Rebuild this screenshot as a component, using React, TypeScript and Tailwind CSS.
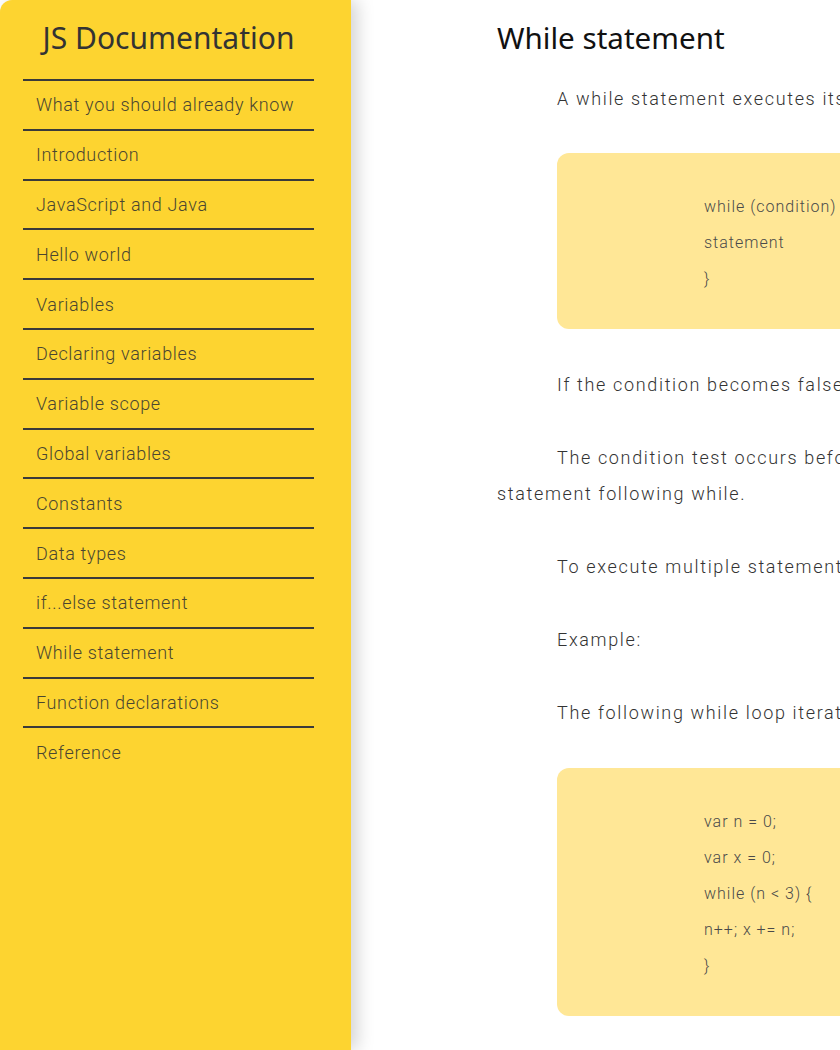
import React from "react";

const items = [
  "What you should already know",
  "Introduction",
  "JavaScript and Java",
  "Hello world",
  "Variables",
  "Declaring variables",
  "Variable scope",
  "Global variables",
  "Constants",
  "Data types",
  "if...else statement",
  "While statement",
  "Function declarations",
  "Reference",
];

const heading = { fontFamily: '"Noto Sans", "Open Sans", sans-serif' };
const body = { fontFamily: 'Roboto, "Liberation Sans", sans-serif' };

function Code({ lines }: { lines: string[] }) {
  return (
    <div className="ml-[60px] w-[600px] rounded-[12px] bg-[#FFE796] pt-[36px] pb-[32px] pl-[147px] text-[16px] font-light leading-[36px] tracking-[1px] text-[#4a4a4a]">
      {lines.map((l, i) => (
        <div key={i} className="whitespace-pre">{l}</div>
      ))}
    </div>
  );
}

export default function App() {
  return (
    <div className="flex h-[1050px] w-[840px] overflow-hidden bg-white" style={body}>
      <aside className="relative z-10 h-[1050px] w-[351px] shrink-0 rounded-tl-[12px] bg-[#FDD430] shadow-[6px_0_18px_rgba(0,0,0,0.18)]">
        <h1 className="pt-[18px] pr-[14px] text-center text-[30px] leading-[40px] text-[#333]" style={heading}>
          JS Documentation
        </h1>
        <ul className="ml-[23px] mt-[21px] w-[291px]">
          {items.map((t) => (
            <li
              key={t}
              className="flex h-[49.8px] items-center border-t-2 border-[#3a3a3a] pl-[13px] text-[18px] font-light tracking-[0.65px] text-[#4a4630]"
            >
              {t}
            </li>
          ))}
        </ul>
      </aside>
      <main className="shrink-0 pl-[146px] pt-[18px] text-[18px] font-light tracking-[1.65px] text-[#333]">
        <h2 className="text-[29.6px] font-normal leading-[40px] tracking-normal text-[#111]" style={heading}>
          While statement
        </h2>
        <p className="mt-[23px] whitespace-nowrap indent-[60px] leading-[36px]">
          A while statement executes its statements as long as a specified condition evaluates to true. A while statement looks as follows:
        </p>
        <div className="mt-[36px]">
          <Code lines={["while (condition)", "statement", "}"]} />
        </div>
        <p className="mt-[38px] whitespace-nowrap indent-[60px] leading-[36px]">
          If the condition becomes false, statement within the loop stops executing and control passes to the statement following the loop.
        </p>
        <p className="mt-[37px] whitespace-nowrap indent-[60px] leading-[36px]">
          The condition test occurs before statement in the loop is executed. If the condition returns true, statement is executed and the condition is tested again. If the condition returns false, execution stops, and control is passed to the
          <br />
          statement following while.
        </p>
        <p className="mt-[37px] whitespace-nowrap indent-[60px] leading-[36px]">
          To execute multiple statements, use a block statement ({"{ ... }"}) to group those statements.
        </p>
        <p className="mt-[37px] whitespace-nowrap indent-[60px] leading-[36px]">Example:</p>
        <p className="mt-[37px] whitespace-nowrap indent-[60px] leading-[36px]">
          The following while loop iterates as long as n is less than three:
        </p>
        <div className="mt-[37px]">
          <Code lines={["var n = 0;", "var x = 0;", "while (n < 3) {", "n++; x += n;", "}"]} />
        </div>
      </main>
    </div>
  );
}
